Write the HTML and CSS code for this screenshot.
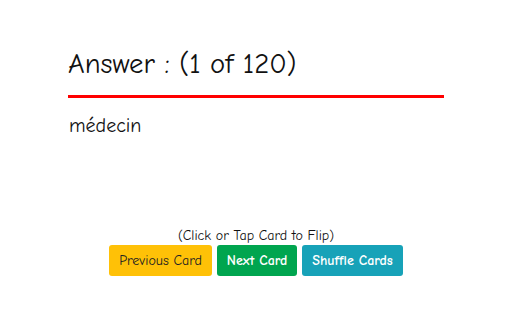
FILE: index.html
```html
<!DOCTYPE html>
<html lang="fr">
<head>
    <meta charset="UTF-8">
    <meta name="viewport" content="width=device-width, initial-scale=1.0">
    <title>Flash Cards</title>
    <link rel="stylesheet" href="styles.css">
</head>
<body>
    <div class="card" id="card">
        <h1 class="card-title">Answer : (<span id="cardNum">1</span> of <span id="cardTotal">120</span>)</h1>
        <p class="card-text" id="cardText">médecin</p>
    </div>

    <div class="controls">
        <p class="hint">(Click or Tap Card to Flip)</p>
        <div class="buttons">
            <button class="btn btn-prev" id="prevBtn">Previous Card</button>
            <button class="btn btn-next" id="nextBtn">Next Card</button>
            <button class="btn btn-shuffle" id="shuffleBtn">Shuffle Cards</button>
        </div>
    </div>
</body>
</html>
```

FILE: styles.css
```css
body {
    font-family: "Comic Sans MS", "Comic Neue", cursive;
    background-color: #fff;
    color: #111;
    margin: 0;
    padding: 0;
}

.card {
    width: 376px;
    height: 228px;
    margin: 0 auto;
    padding-top: 46px;
    box-sizing: border-box;
    cursor: pointer;
}

.card-title {
    font-size: 28.7px;
    font-weight: normal;
    line-height: 36px;
    margin: 0;
    padding-bottom: 13px;
    border-bottom: 3px solid #f00;
}

.card-text {
    font-size: 20px;
    margin: 16px 0 0 1px;
}

.controls {
    text-align: center;
}

.hint {
    font-size: 14px;
    line-height: 16px;
    margin: 0 0 1px 0;
}

.buttons {
    display: flex;
    justify-content: center;
    gap: 5px;
}

.btn {
    font-family: inherit;
    font-size: 14px;
    height: 31px;
    padding: 0 10px;
    border: none;
    border-radius: 3px;
    cursor: pointer;
}

.btn-prev {
    background-color: #ffc107;
    color: #222;
}

.btn-next {
    background-color: #00a54f;
    color: #fff;
    font-weight: bold;
}

.btn-shuffle {
    background-color: #17a2b8;
    color: #fff;
    font-weight: bold;
}
```
